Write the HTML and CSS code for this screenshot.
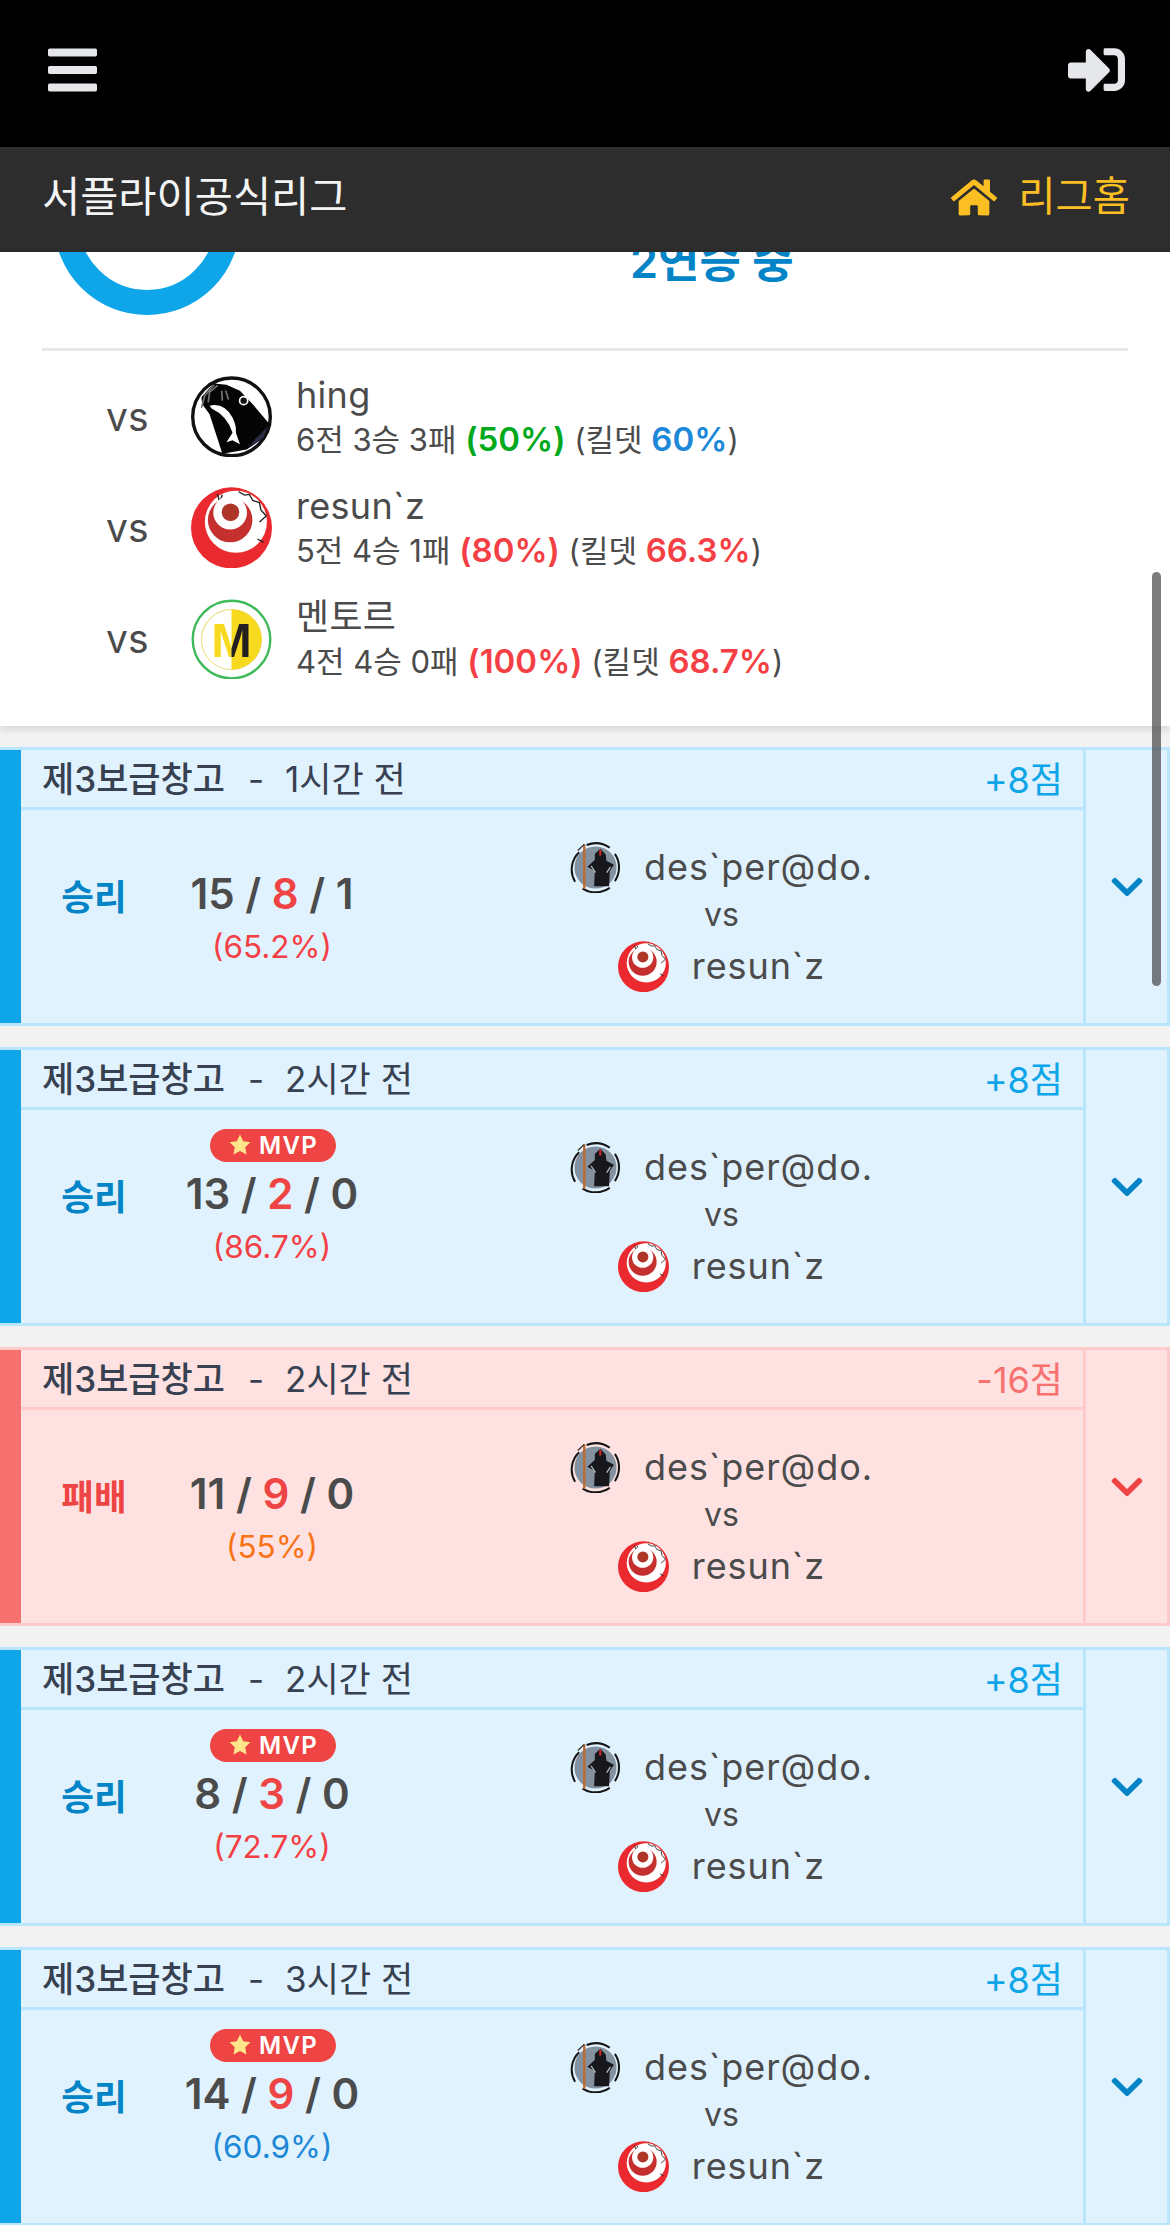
FILE: index.html
```html
<!DOCTYPE html>
<html lang="ko">
<head>
<meta charset="utf-8">
<title>서플라이공식리그</title>
<link rel="stylesheet" href="styles.css">
</head>
<body>
<svg class="defs" width="0" height="0" aria-hidden="true">
  <defs>
    <clipPath id="m-left"><rect x="67" y="22" width="120" height="240"/></clipPath>
    <clipPath id="m-right"><rect x="187" y="22" width="120" height="240"/></clipPath>
    <symbol id="av-seal" viewBox="67 22 240 240">
      <circle cx="187" cy="143" r="115" fill="#fff" stroke="#111" stroke-width="10"/>
      <path d="M98 85 L134 44 L172 48 L212 66 L252 108 L300 165 L284 204 L232 240 L160 252 L122 135 L100 105Z" fill="#050505"/>
      <path d="M258 208 L296 170 L282 204 L238 236Z" fill="#2b2d45"/>
      <path d="M122 110 Q165 100 190 145 Q202 170 200 190 L212 224 L190 212 L172 218 L190 190 Q175 140 128 118Z" fill="#fff"/>
      <circle cx="223" cy="95" r="12" fill="#111" stroke="#fff" stroke-width="5"/>
      <path d="M98 116 L108 80 L135 48 M118 100 L122 70 L146 50 M160 95 L158 66 M178 92 L170 66" fill="none" stroke="#777" stroke-width="5"/>
    </symbol>
    <symbol id="av-red" viewBox="67 22 240 240">
      <circle cx="187" cy="143" r="120" fill="#ea2a2f"/>
      <circle cx="200" cy="125" r="92" fill="#fff"/>
      <path d="M145 42 L152 66 L160 45 M208 36 L226 46 L240 44 L250 62 L270 68 L274 90 L290 108 L270 126 M264 176 L282 186" fill="none" stroke="#222" stroke-width="4"/>
      <circle cx="183" cy="120" r="66" fill="#c5302e"/>
      <circle cx="183" cy="98" r="50" fill="#fff"/>
      <circle cx="184" cy="97" r="26" fill="#ad3629"/>
    </symbol>
    <symbol id="av-m" viewBox="67 22 240 240">
      <circle cx="187" cy="145" r="115" fill="#fff" stroke="#3fba58" stroke-width="7"/>
      <circle cx="187" cy="145" r="89" fill="#fff" stroke="#e8dc7c" stroke-width="3"/>
      <path d="M187 56 A89 89 0 0 1 187 234Z" fill="#f7d91f"/>
      <text class="logo-m" x="187" y="197" text-anchor="middle" fill="#f7d91f" clip-path="url(#m-left)">M</text>
      <text class="logo-m" x="187" y="197" text-anchor="middle" fill="#231f20" clip-path="url(#m-right)">M</text>
    </symbol>
    <symbol id="av-reaper" viewBox="33 35 150 150">
      <circle cx="108" cy="110" r="62" fill="#84929f"/>
      <path d="M48 152 A70 70 0 0 1 60 65 M82 44 A72 72 0 0 1 150 52 M165 70 A72 72 0 0 1 165 150 M150 170 A72 72 0 0 1 70 172" fill="none" stroke="#151515" stroke-width="6"/>
      <path d="M122 55 L138 72 L140 90 L162 102 L150 120 L148 165 L104 165 L106 120 L84 108 L106 88 L106 70Z" fill="#17171c"/>
      <path d="M95 105 L108 125 M152 108 L141 125" stroke="#aab3bb" stroke-width="4"/>
      <rect x="119" y="58" width="6" height="17" fill="#d3282b"/>
      <path d="M75 42 L75 172" stroke="#bb6a2f" stroke-width="7"/>
      <path d="M75 42 L56 60" stroke="#333" stroke-width="4"/>
    </symbol>
    <symbol id="i-chevron" viewBox="0 0 448 512">
      <path d="M207.029 381.476L12.686 187.132c-9.373-9.373-9.373-24.569 0-33.941l22.667-22.667c9.357-9.357 24.522-9.375 33.901-.04L224 284.505l154.745-154.021c9.379-9.335 24.544-9.317 33.901.04l22.667 22.667c9.373 9.373 9.373 24.569 0 33.941L240.971 381.476c-9.373 9.372-24.569 9.372-33.942 0z"/>
    </symbol>
    <symbol id="i-star" viewBox="0 0 24 24">
      <path d="M12 1.6l3.2 6.6 7.2 1-5.2 5.1 1.3 7.2L12 18.1l-6.5 3.4 1.3-7.2L1.6 9.2l7.2-1z" stroke-linejoin="round"/>
    </symbol>
  </defs>
</svg>

<div class="page">
  <header class="topbar">
    <svg class="icon-bars" viewBox="0 0 448 512"><path d="M16 132h416c8.837 0 16-7.163 16-16V76c0-8.837-7.163-16-16-16H16C7.163 60 0 67.163 0 76v40c0 8.837 7.163 16 16 16zm0 160h416c8.837 0 16-7.163 16-16v-40c0-8.837-7.163-16-16-16H16c-8.837 0-16 7.163-16 16v40c0 8.837 7.163 16 16 16zm0 160h416c8.837 0 16-7.163 16-16v-40c0-8.837-7.163-16-16-16H16c-8.837 0-16 7.163-16 16v40c0 8.837 7.163 16 16 16z"/></svg>
    <svg class="icon-signin" viewBox="0 0 512 512"><path d="M416 448h-84c-6.6 0-12-5.4-12-12v-40c0-6.6 5.4-12 12-12h84c17.7 0 32-14.3 32-32V160c0-17.7-14.3-32-32-32h-84c-6.6 0-12-5.4-12-12V76c0-6.6 5.4-12 12-12h84c53 0 96 43 96 96v192c0 53-43 96-96 96zm-47-201L201 79c-15-15-41-4.5-41 17v96H24c-13.3 0-24 10.7-24 24v96c0 13.3 10.7 24 24 24h136v96c0 21.5 26 32 41 17l168-168c9.3-9.4 9.3-24.6 0-34z"/></svg>
  </header>
  <nav class="subbar">
    <span class="league">서플라이공식리그</span>
    <span class="home">
      <svg class="icon-home" viewBox="0 0 576 512"><path d="M280.37 148.26L96 300.11V464a16 16 0 0 0 16 16l112.06-.29a16 16 0 0 0 15.92-16V368a16 16 0 0 1 16-16h64a16 16 0 0 1 16 16v95.64a16 16 0 0 0 16 16.05L464 480a16 16 0 0 0 16-16V300L295.67 148.26a12.19 12.19 0 0 0-15.3 0zM571.6 251.47L488 182.56V44.05a12 12 0 0 0-12-12h-56a12 12 0 0 0-12 12v72.61L318.47 43a48 48 0 0 0-61 0L4.34 251.47a12 12 0 0 0-1.6 16.9l25.5 31A12 12 0 0 0 45.15 301l235.22-193.74a12.19 12.19 0 0 1 15.3 0L530.9 301a12 12 0 0 0 16.9-1.6l25.5-31a12 12 0 0 0-1.7-16.93z"/></svg>
      리그홈
    </span>
  </nav>

  <section class="panel">
    <div class="summary">
      <svg class="ring" viewBox="0 0 186 186"><circle cx="93" cy="93" r="80.5" fill="none" stroke="#0ea5e9" stroke-width="25"/></svg>
      <div class="streak">2연승 중</div>
    </div>
    <div class="opponents">
      <div class="opponent">
        <span class="opp-vs">vs</span>
        <svg class="opp-avatar"><use href="#av-seal"/></svg>
        <div>
          <div class="opp-name">hing</div>
          <div class="opp-stats">6전 3승 3패 <b class="good">(50%)</b> (킬뎃 <b class="blue">60%</b>)</div>
        </div>
      </div>
      <div class="opponent">
        <span class="opp-vs">vs</span>
        <svg class="opp-avatar"><use href="#av-red"/></svg>
        <div>
          <div class="opp-name">resun`z</div>
          <div class="opp-stats">5전 4승 1패 <b class="red">(80%)</b> (킬뎃 <b class="red">66.3%</b>)</div>
        </div>
      </div>
      <div class="opponent">
        <span class="opp-vs">vs</span>
        <svg class="opp-avatar"><use href="#av-m"/></svg>
        <div>
          <div class="opp-name">멘토르</div>
          <div class="opp-stats">4전 4승 0패 <b class="red">(100%)</b> (킬뎃 <b class="red">68.7%</b>)</div>
        </div>
      </div>
    </div>
  </section>

  <main class="matches">
    <article class="match win">
      <div class="match-main">
        <div class="match-head"><span class="map">제3보급창고</span><span class="dash">-</span><span class="ago">1시간 전</span><span class="points">+8점</span></div>
        <div class="match-body">
          <div class="result">승리</div>
          <div class="kda-box">
            <div class="kda">15 / <em>8</em> / 1</div>
            <div class="ratio red">(65.2%)</div>
          </div>
          <div class="players">
            <div class="player"><svg class="avatar"><use href="#av-reaper"/></svg>des`per@do.</div>
            <div class="players-vs">vs</div>
            <div class="player"><svg class="avatar"><use href="#av-red"/></svg>resun`z</div>
          </div>
        </div>
      </div>
      <div class="toggle"><svg class="chevron"><use href="#i-chevron"/></svg></div>
    </article>

    <article class="match win">
      <div class="match-main">
        <div class="match-head"><span class="map">제3보급창고</span><span class="dash">-</span><span class="ago">2시간 전</span><span class="points">+8점</span></div>
        <div class="match-body">
          <div class="result">승리</div>
          <div class="kda-box">
            <span class="mvp"><svg class="star"><use href="#i-star"/></svg>MVP</span>
            <div class="kda">13 / <em>2</em> / 0</div>
            <div class="ratio red">(86.7%)</div>
          </div>
          <div class="players">
            <div class="player"><svg class="avatar"><use href="#av-reaper"/></svg>des`per@do.</div>
            <div class="players-vs">vs</div>
            <div class="player"><svg class="avatar"><use href="#av-red"/></svg>resun`z</div>
          </div>
        </div>
      </div>
      <div class="toggle"><svg class="chevron"><use href="#i-chevron"/></svg></div>
    </article>

    <article class="match loss">
      <div class="match-main">
        <div class="match-head"><span class="map">제3보급창고</span><span class="dash">-</span><span class="ago">2시간 전</span><span class="points">-16점</span></div>
        <div class="match-body">
          <div class="result">패배</div>
          <div class="kda-box">
            <div class="kda">11 / <em>9</em> / 0</div>
            <div class="ratio orange">(55%)</div>
          </div>
          <div class="players">
            <div class="player"><svg class="avatar"><use href="#av-reaper"/></svg>des`per@do.</div>
            <div class="players-vs">vs</div>
            <div class="player"><svg class="avatar"><use href="#av-red"/></svg>resun`z</div>
          </div>
        </div>
      </div>
      <div class="toggle"><svg class="chevron"><use href="#i-chevron"/></svg></div>
    </article>

    <article class="match win">
      <div class="match-main">
        <div class="match-head"><span class="map">제3보급창고</span><span class="dash">-</span><span class="ago">2시간 전</span><span class="points">+8점</span></div>
        <div class="match-body">
          <div class="result">승리</div>
          <div class="kda-box">
            <span class="mvp"><svg class="star"><use href="#i-star"/></svg>MVP</span>
            <div class="kda">8 / <em>3</em> / 0</div>
            <div class="ratio red">(72.7%)</div>
          </div>
          <div class="players">
            <div class="player"><svg class="avatar"><use href="#av-reaper"/></svg>des`per@do.</div>
            <div class="players-vs">vs</div>
            <div class="player"><svg class="avatar"><use href="#av-red"/></svg>resun`z</div>
          </div>
        </div>
      </div>
      <div class="toggle"><svg class="chevron"><use href="#i-chevron"/></svg></div>
    </article>

    <article class="match win">
      <div class="match-main">
        <div class="match-head"><span class="map">제3보급창고</span><span class="dash">-</span><span class="ago">3시간 전</span><span class="points">+8점</span></div>
        <div class="match-body">
          <div class="result">승리</div>
          <div class="kda-box">
            <span class="mvp"><svg class="star"><use href="#i-star"/></svg>MVP</span>
            <div class="kda">14 / <em>9</em> / 0</div>
            <div class="ratio blue">(60.9%)</div>
          </div>
          <div class="players">
            <div class="player"><svg class="avatar"><use href="#av-reaper"/></svg>des`per@do.</div>
            <div class="players-vs">vs</div>
            <div class="player"><svg class="avatar"><use href="#av-red"/></svg>resun`z</div>
          </div>
        </div>
      </div>
      <div class="toggle"><svg class="chevron"><use href="#i-chevron"/></svg></div>
    </article>
  </main>

  <div class="scrollbar"></div>
</div>
</body>
</html>
```

FILE: styles.css
```css
* { box-sizing: border-box; }

html, body {
  margin: 0;
  height: 2225px;
  overflow: hidden;
}

body {
  background: #f2f2f2;
  color: #4b4b4b;
  font-family: Inter, "Noto Sans CJK KR", sans-serif;
  font-size: 36px;
}

.defs { position: absolute; }

.page {
  position: relative;
  height: 2225px;
  overflow: hidden;
}

.topbar {
  height: 147px;
  background: #000;
  display: flex;
  align-items: flex-start;
  justify-content: space-between;
  padding: 42px 45px 0 48px;
}

.icon-bars { width: 49px; height: 56px; fill: #e5e7eb; }
.icon-signin { width: 57px; height: 57px; margin-top: -1px; fill: #e5e7eb; }

.subbar {
  height: 105px;
  background: #2d2d2d;
  display: flex;
  align-items: center;
  justify-content: space-between;
  padding: 0 40px 4px 42px;
  font-size: 41.5px;
  line-height: 1;
}

.league { color: #f3f4f6; }

.home {
  color: #fbbf24;
  display: flex;
  align-items: center;
  gap: 21px;
  font-size: 40.5px;
}

.icon-home { width: 46px; height: 41px; fill: #fbbf24; }

.panel {
  background: #fff;
  height: 474px;
  box-shadow: 0 3px 8px rgba(0, 0, 0, .12);
  position: relative;
  padding: 0 42px;
}

.summary {
  height: 96px;
  overflow: hidden;
  display: flex;
  align-items: flex-end;
  position: relative;
}

.ring {
  width: 186px;
  height: 186px;
  flex: none;
  margin-left: 12px;
  margin-bottom: 33px;
}

.streak {
  margin-left: 390px;
  margin-bottom: 56px;
  color: #0284c7;
  font-size: 45px;
  font-weight: 600;
  line-height: 60px;
  white-space: nowrap;
}

.opponents {
  border-top: 3px solid #e5e7eb;
  padding-top: 10px;
}

.opponent {
  height: 111px;
  display: grid;
  grid-template-columns: 85px 105px 1fr;
  align-items: center;
  padding-left: 64px;
}

.opp-vs { font-size: 39px; line-height: 1; }
.opp-avatar { width: 81px; height: 81px; }

.opp-name { font-size: 36px; line-height: 45px; letter-spacing: .3px; }
.opp-stats { font-size: 31px; line-height: 42px; white-space: nowrap; }

.opp-stats b { font-weight: 600; font-size: 33px; }

.good { color: #00a91c; }
.red { color: #f43f45; }
.blue { color: #1d87d8; }
.orange { color: #f97316; }

.matches {
  margin-top: 21px;
  display: flex;
  flex-direction: column;
  gap: 21px;
}

.match {
  height: 279px;
  flex: none;
  display: flex;
  border-width: 3px 3px 3px 0;
  border-style: solid;
}

.match::before {
  content: "";
  width: 21px;
  flex: none;
}

.match.win { background: #e0f2fe; border-color: #bae6fd; }
.match.loss { background: #fee2e2; border-color: #fecaca; }
.match.win::before { background: #0ea5e9; }
.match.loss::before { background: #f87171; }

.match-main {
  flex: 1;
  display: flex;
  flex-direction: column;
  min-width: 0;
}

.match-head {
  height: 60px;
  flex: none;
  display: flex;
  align-items: center;
  padding: 2px 20px 0 21px;
  border-bottom: 3px solid;
  font-size: 35px;
  color: #374151;
  line-height: 1;
}

.win .match-head { border-color: #bae6fd; }
.loss .match-head { border-color: #fecaca; }

.map { font-weight: 500; }
.dash { margin: 0 21px 0 23px; }
.points { margin-left: auto; font-size: 36px; }

.win .points { color: #0ea5e9; }
.loss .points { color: #f87171; }

.match-body {
  flex: 1;
  display: grid;
  grid-template-columns: 144px 214px 1fr;
  padding-right: 19px;
  align-items: center;
}

.result {
  text-align: center;
  font-size: 35.5px;
  font-weight: 600;
  padding: 0 0 36px 2px;
  line-height: 1.2;
}

.win .result { color: #0284c7; }
.loss .result { color: #ef4444; }

.kda-box {
  position: relative;
  text-align: center;
  padding-bottom: 2px;
}

.kda {
  font-size: 42px;
  font-weight: 600;
  line-height: 60px;
  color: #4b4b4b;
  white-space: nowrap;
}

.kda em { font-style: normal; color: #ef4444; }

.ratio { font-size: 31.5px; line-height: 42px; margin-top: 2px; }

.mvp {
  position: absolute;
  left: 45px;
  top: -35px;
  width: 126px;
  height: 33px;
  border-radius: 17px;
  background: #ef4444;
  color: #fff;
  font-size: 24px;
  font-weight: 600;
  letter-spacing: 1.3px;
  display: flex;
  align-items: center;
  justify-content: center;
  gap: 7px;
}

.star { width: 24px; height: 24px; fill: #fde68a; }

.players {
  display: flex;
  flex-direction: column;
  align-items: center;
}

.player {
  display: flex;
  align-items: center;
  gap: 23px;
  height: 51px;
  font-size: 36px;
  letter-spacing: .9px;
  line-height: 1;
}

.players-vs { font-size: 32px; height: 48px; line-height: 43px; }

.avatar { width: 51px; height: 51px; }

.toggle {
  width: 84px;
  flex: none;
  display: flex;
  align-items: center;
  justify-content: center;
  border-left: 3px solid;
}

.win .toggle { border-color: #bae6fd; }
.loss .toggle { border-color: #fecaca; }

.chevron { width: 32px; height: 36px; }
.win .chevron { fill: #0284c7; }
.loss .chevron { fill: #ef4444; }

.logo-m {
  font-family: "Liberation Sans", sans-serif;
  font-weight: 700;
  font-size: 144px;
}

.scrollbar {
  position: absolute;
  right: 9px;
  top: 572px;
  width: 9px;
  height: 414px;
  border-radius: 5px;
  background: rgba(70, 70, 70, .7);
}
```
